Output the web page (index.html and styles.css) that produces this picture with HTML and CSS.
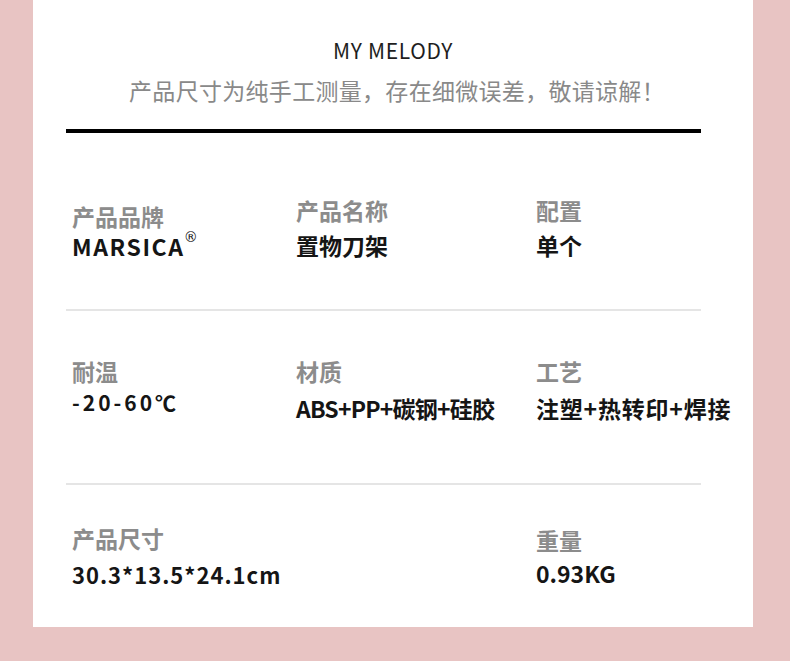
FILE: index.html
```html
<!DOCTYPE html>
<html lang="zh-CN">
<head>
<meta charset="utf-8">
<link rel="stylesheet" href="styles.css">
</head>
<body>
<div class="card">
  <header class="head">
    <h1 class="title">MY MELODY</h1>
    <p class="subtitle">产品尺寸为纯手工测量，存在细微误差，敬请谅解！</p>
  </header>
  <div class="rule"></div>
  <div class="specs">
    <div class="row row1">
      <div class="cell c-a">
        <div class="label">产品品牌</div>
        <div class="value latin brand">MARSICA<sup class="reg">®</sup></div>
      </div>
      <div class="cell c-b">
        <div class="label">产品名称</div>
        <div class="value">置物刀架</div>
      </div>
      <div class="cell c-b">
        <div class="label">配置</div>
        <div class="value">单个</div>
      </div>
    </div>
    <div class="row row2">
      <div class="cell c-c">
        <div class="label">耐温</div>
        <div class="value latin temp">-20-60℃</div>
      </div>
      <div class="cell c-d">
        <div class="label">材质</div>
        <div class="value mat">ABS+PP+碳钢+硅胶</div>
      </div>
      <div class="cell c-d">
        <div class="label">工艺</div>
        <div class="value craft">注塑+热转印+焊接</div>
      </div>
    </div>
    <div class="row row3">
      <div class="cell c-e">
        <div class="label">产品尺寸</div>
        <div class="value latin size">30.3*13.5*24.1cm</div>
      </div>
      <div class="cell"></div>
      <div class="cell c-f">
        <div class="label">重量</div>
        <div class="value latin weight">0.93KG</div>
      </div>
    </div>
  </div>
</div>
</body>
</html>
```
FILE: styles.css
```css
* { box-sizing: border-box; }
html, body { margin: 0; padding: 0; }
body {
  width: 790px;
  height: 661px;
  background: #e8c4c3;
  font-family: "Noto Sans CJK SC", "Noto Sans", sans-serif;
  overflow: hidden;
}
.card {
  margin-left: 33px;
  width: 720px;
  height: 627px;
  background: #ffffff;
  padding-top: 36px;
}
.head { text-align: center; }
.title {
  margin: 0;
  font-size: 21px;
  line-height: 28px;
  font-weight: 400;
  color: #1e1e1e;
  letter-spacing: 0.7px;
}
.subtitle {
  margin: 11px 0 0;
  padding-left: 8px;
  font-size: 23px;
  line-height: 30px;
  font-weight: 400;
  color: #898989;
  letter-spacing: 0.3px;
}
.rule {
  margin: 24px 0 0 33px;
  width: 635px;
  height: 4px;
  background: #000;
}
.specs {
  margin-left: 33px;
  width: 635px;
}
.row {
  display: grid;
  grid-template-columns: 230px 240px 165px;
  border-bottom: 2px solid #e5e5e5;
}
.row1 { height: 178px; }
.row2 { height: 174px; }
.row3 { height: 142px; border-bottom: none; }
.cell:first-child { padding-left: 6px; }
.label {
  font-size: 23px;
  line-height: 28px;
  font-weight: 700;
  color: #8c8c8c;
  white-space: nowrap;
}
.value {
  font-size: 23px;
  line-height: 28px;
  font-weight: 700;
  color: #151515;
  white-space: nowrap;
}
.c-a { padding-top: 69px; }
.c-a .value { margin-top: 2px; }
.c-b { padding-top: 63px; }
.c-b .value { margin-top: 7px; }
.c-c { padding-top: 46px; }
.c-c .value { margin-top: 3px; }
.c-d { padding-top: 46px; }
.c-d .value { margin-top: 9px; }
.c-e { padding-top: 39px; }
.c-e .value { margin-top: 8px; }
.c-f { padding-top: 41px; }
.c-f .value { margin-top: 5px; }
.brand { letter-spacing: 1.6px; font-size: 23px; }
.reg {
  font-family: "DejaVu Sans", sans-serif;
  font-size: 14px;
  font-weight: 400;
  letter-spacing: 0;
  vertical-align: 14px;
  line-height: 0;
  margin-left: -1px;
}
.temp { letter-spacing: 3px; font-size: 21px; }
.mat { letter-spacing: -0.8px; }
.craft { letter-spacing: 0.8px; }
.size { letter-spacing: 1px; font-size: 22px; }
.weight { font-size: 23px; }
```
